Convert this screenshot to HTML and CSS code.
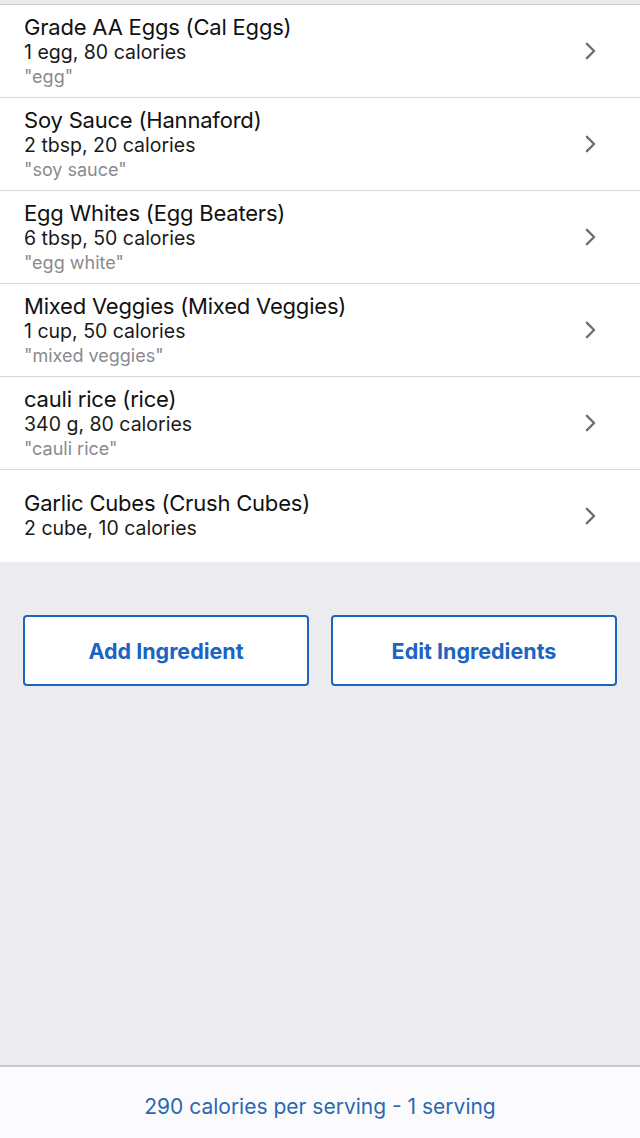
FILE: index.html
```html
<!DOCTYPE html>
<html lang="en">
<head>
    <meta charset="UTF-8">
    <meta name="viewport" content="width=device-width, initial-scale=1.0">
    <title>Ingredients</title>
    <link rel="stylesheet" href="styles.css">
</head>
<body>
    <div class="screen">
        <div class="top-strip"></div>

        <ul class="ingredient-list">
            <li class="ingredient-row">
                <div class="ingredient-info">
                    <div class="ingredient-name">Grade AA Eggs (Cal Eggs)</div>
                    <div class="ingredient-amount">1 egg, 80 calories</div>
                    <div class="ingredient-query">"egg"</div>
                </div>
                <svg class="chevron" viewBox="0 0 12 20"><path d="M2 2 L10 10 L2 18"/></svg>
            </li>
            <li class="ingredient-row">
                <div class="ingredient-info">
                    <div class="ingredient-name">Soy Sauce (Hannaford)</div>
                    <div class="ingredient-amount">2 tbsp, 20 calories</div>
                    <div class="ingredient-query">"soy sauce"</div>
                </div>
                <svg class="chevron" viewBox="0 0 12 20"><path d="M2 2 L10 10 L2 18"/></svg>
            </li>
            <li class="ingredient-row">
                <div class="ingredient-info">
                    <div class="ingredient-name">Egg Whites (Egg Beaters)</div>
                    <div class="ingredient-amount">6 tbsp, 50 calories</div>
                    <div class="ingredient-query">"egg white"</div>
                </div>
                <svg class="chevron" viewBox="0 0 12 20"><path d="M2 2 L10 10 L2 18"/></svg>
            </li>
            <li class="ingredient-row">
                <div class="ingredient-info">
                    <div class="ingredient-name">Mixed Veggies (Mixed Veggies)</div>
                    <div class="ingredient-amount">1 cup, 50 calories</div>
                    <div class="ingredient-query">"mixed veggies"</div>
                </div>
                <svg class="chevron" viewBox="0 0 12 20"><path d="M2 2 L10 10 L2 18"/></svg>
            </li>
            <li class="ingredient-row">
                <div class="ingredient-info">
                    <div class="ingredient-name">cauli rice (rice)</div>
                    <div class="ingredient-amount">340 g, 80 calories</div>
                    <div class="ingredient-query">"cauli rice"</div>
                </div>
                <svg class="chevron" viewBox="0 0 12 20"><path d="M2 2 L10 10 L2 18"/></svg>
            </li>
            <li class="ingredient-row">
                <div class="ingredient-info">
                    <div class="ingredient-name">Garlic Cubes (Crush Cubes)</div>
                    <div class="ingredient-amount">2 cube, 10 calories</div>
                </div>
                <svg class="chevron" viewBox="0 0 12 20"><path d="M2 2 L10 10 L2 18"/></svg>
            </li>
        </ul>

        <div class="actions">
            <button class="action-btn">Add Ingredient</button>
            <button class="action-btn">Edit Ingredients</button>
        </div>

        <div class="footer">
            <span class="footer-text">290 calories per serving - 1 serving</span>
        </div>
    </div>
</body>
</html>
```

FILE: styles.css
```css
* {
    margin: 0;
    padding: 0;
    box-sizing: border-box;
}

body {
    font-family: 'Inter', 'Noto Sans', sans-serif;
    background: #ebebf0;
    color: #111;
}

.screen {
    display: flex;
    flex-direction: column;
    min-height: 1138px;
}

.top-strip {
    height: 5px;
    background: #ebebf0;
    border-bottom: 1px solid #cfcfd3;
}

.ingredient-list {
    list-style: none;
    background: #fff;
}

.ingredient-row {
    display: flex;
    align-items: center;
    justify-content: space-between;
    height: 93px;
    padding: 0 44px 0 24px;
    border-bottom: 1px solid #d6d6d9;
}

.ingredient-row:last-child {
    border-bottom: none;
    height: 92px;
}

.ingredient-name {
    font-size: 22px;
    line-height: 25px;
    letter-spacing: -0.2px;
    color: #111;
}

.ingredient-amount {
    font-size: 19.5px;
    line-height: 25px;
    color: #1a1a1a;
}

.ingredient-query {
    font-size: 18px;
    line-height: 23px;
    color: #8a8a8e;
}

.chevron {
    width: 11px;
    height: 18px;
    fill: none;
    stroke: #6e6e72;
    stroke-width: 2.6;
    stroke-linecap: round;
    stroke-linejoin: round;
}

.actions {
    display: grid;
    grid-template-columns: 1fr 1fr;
    gap: 22px;
    padding: 53px 23px 0;
    flex: 1;
    align-content: start;
}

.action-btn {
    height: 71px;
    background: #fff;
    border: 2.5px solid #1c64c2;
    border-radius: 4px;
    color: #1c64c2;
    font-family: 'Inter', 'Noto Sans', sans-serif;
    font-size: 21.5px;
    font-weight: 700;
}

.footer {
    height: 73px;
    padding-top: 8px;
    background: #fbfbfd;
    border-top: 2px solid #c9c9cd;
    display: flex;
    align-items: center;
    justify-content: center;
}

.footer-text {
    font-size: 21px;
    color: #2b68b0;
}
```
